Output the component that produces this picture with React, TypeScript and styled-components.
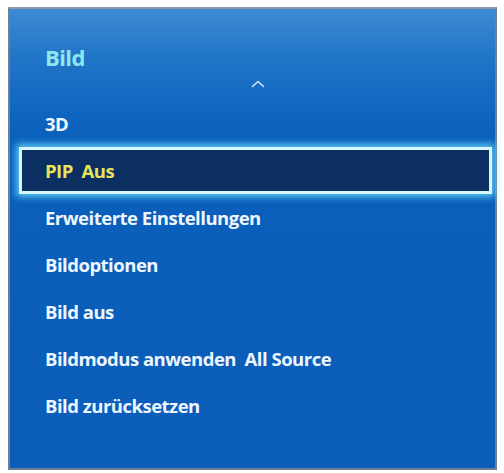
import React from 'react';
import styled, { createGlobalStyle } from 'styled-components';

const GlobalStyle = createGlobalStyle`
  html, body {
    margin: 0;
    padding: 0;
    background: #ffffff;
  }
  body {
    font-family: 'Open Sans', 'Liberation Sans', sans-serif;
  }
`;

const Page = styled.div`
  width: 504px;
  height: 473px;
  padding: 7px 7px 3px 8px;
  box-sizing: border-box;
`;

const Panel = styled.div`
  height: 100%;
  box-sizing: border-box;
  border: 2px solid #6f7f93;
  border-top-color: #8a97a8;
  background: linear-gradient(
    180deg,
    #3f8ad2 0%,
    #2276c8 10%,
    #0f66c0 22%,
    #0a5fbb 30%,
    #0a5eba 100%
  );
  display: flex;
  flex-direction: column;
  padding: 0 3px 0 9px;
`;

const Title = styled.div`
  color: #8ee6ef;
  font-size: 22px;
  font-weight: 700;
  letter-spacing: -0.6px;
  padding: 33px 0 0 26px;
  line-height: 30px;
`;

const ChevronRow = styled.div`
  display: flex;
  justify-content: center;
  align-items: flex-start;
  height: 28px;
  box-sizing: border-box;
  padding: 7px 0 0 4px;
`;

const List = styled.div`
  display: flex;
  flex-direction: column;
`;

const Row = styled.div<{ $selected?: boolean }>`
  height: 47px;
  box-sizing: border-box;
  display: flex;
  align-items: center;
  padding-left: ${(p) => (p.$selected ? '23px' : '26px')};
  font-size: 18.5px;
  font-weight: 700;
  letter-spacing: -0.5px;
  white-space: pre;
  color: ${(p) => (p.$selected ? '#e8e35c' : '#eef6ff')};
  background: ${(p) => (p.$selected ? '#0b2f60' : 'transparent')};
  border: ${(p) => (p.$selected ? '3px solid #d8f6ff' : 'none')};
  box-shadow: ${(p) =>
    p.$selected ? '0 0 7px 3px rgba(110, 225, 255, 0.8)' : 'none'};
`;

const items = [
  '3D',
  'PIP  Aus',
  'Erweiterte Einstellungen',
  'Bildoptionen',
  'Bild aus',
  'Bildmodus anwenden  All Source',
  'Bild zurücksetzen',
];

const App: React.FC = () => {
  return (
    <>
      <GlobalStyle />
      <Page>
        <Panel>
          <Title>Bild</Title>
          <ChevronRow>
            <svg width="16" height="10" viewBox="0 0 16 10">
              <path
                d="M2.5 7.5 L8 2.5 L13.5 7.5"
                fill="none"
                stroke="#cfe8ff"
                strokeWidth="1.6"
                strokeLinecap="round"
                strokeLinejoin="round"
              />
            </svg>
          </ChevronRow>
          <List>
            {items.map((label, i) => (
              <Row key={label} $selected={i === 1}>
                {label}
              </Row>
            ))}
          </List>
        </Panel>
      </Page>
    </>
  );
};

export default App;
